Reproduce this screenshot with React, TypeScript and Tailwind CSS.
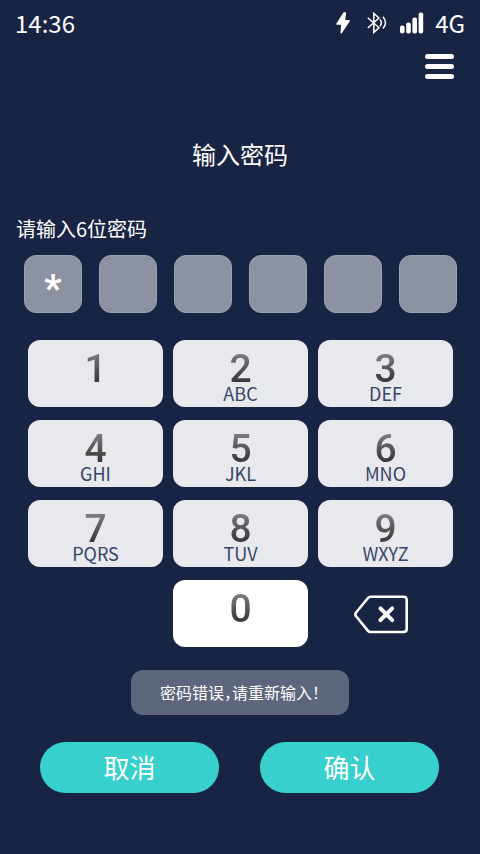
import { useState } from "react";

const keys = [
  { digit: "1", letters: "" },
  { digit: "2", letters: "ABC" },
  { digit: "3", letters: "DEF" },
  { digit: "4", letters: "GHI" },
  { digit: "5", letters: "JKL" },
  { digit: "6", letters: "MNO" },
  { digit: "7", letters: "PQRS" },
  { digit: "8", letters: "TUV" },
  { digit: "9", letters: "WXYZ" },
];

const PIN_LENGTH = 6;

const StatusBar = () => {
  return (
    <div className="flex h-[46px] items-center justify-between px-[15px] text-2xl leading-[44px]">
      <span>14:36</span>
      <div className="flex items-center">
        <svg className="mr-[17px]" width="14" height="22" viewBox="0 0 14 22" fill="currentColor" aria-hidden="true">
          <path
            d="M8 1 1 12h4.8L5.2 20.8 13.2 8.8H8.4L9.4 1z"
            stroke="currentColor"
            strokeWidth="1.4"
            strokeLinejoin="round"
          />
        </svg>
        <svg
          className="mr-[13px]"
          width="20"
          height="22"
          viewBox="0 0 20 22"
          fill="none"
          stroke="currentColor"
          strokeWidth="1.5"
          aria-hidden="true"
        >
          <path d="M0.8 5.8 12 15.8 6.8 20.4V1.4L12 6 0.8 16" />
          <path d="M13 7.6q2.6 3 0 6.6M16 4.8q5 6 0 11.6" />
        </svg>
        <svg className="mr-[11px]" width="24" height="22" viewBox="0 0 24 22" fill="currentColor" aria-hidden="true">
          <rect x="0" y="13.5" width="4.6" height="8" rx="2" />
          <rect x="6.2" y="10.5" width="4.6" height="11" rx="2" />
          <rect x="12.4" y="5.5" width="4.6" height="16" rx="2" />
          <rect x="18.6" y="0.5" width="4.6" height="21" rx="2" />
        </svg>
        <span>4G</span>
      </div>
    </div>
  );
};

const Digit = ({ children }: { children: string }) => {
  return (
    <span className="bg-linear-to-b from-[#787878] from-15% to-[#3e3e3e] to-75% bg-clip-text font-[Roboto,sans-serif] text-[39px] leading-[38px] font-medium text-transparent">
      {children}
    </span>
  );
};

const App = () => {
  const [pin, setPin] = useState("1");

  const press = (digit: string) => setPin((p) => (p + digit).slice(0, PIN_LENGTH));

  return (
    <main className="min-h-screen bg-[#182444] pb-[61px] font-['Noto_Sans_CJK_SC',sans-serif] text-white">
      <StatusBar />

      <div className="flex justify-end px-[26px] pt-2">
        <button type="button" aria-label="菜单" className="flex w-[29px] flex-col gap-[5px]">
          <span className="h-[5px] w-full rounded-full bg-white" />
          <span className="h-[5px] w-full rounded-full bg-white" />
          <span className="h-[5px] w-full rounded-full bg-white" />
        </button>
      </div>

      <h1 className="mt-[57px] text-center text-2xl leading-9 font-normal">输入密码</h1>

      <label htmlFor="pin-0" className="mt-[42px] block px-4 text-xl leading-[30px]">
        请输入6位密码
      </label>
      <div className="mt-[11px] grid grid-cols-6 gap-[17px] pr-[23px] pl-6">
        {Array.from({ length: PIN_LENGTH }, (_, i) => (
          <input
            key={i}
            id={`pin-${i}`}
            aria-label={`第${i + 1}位`}
            readOnly
            value={i < pin.length ? "*" : ""}
            className="h-[58px] w-full rounded-xl border border-[#9ba2b1] bg-[#8c92a2] pt-2.5 text-center font-[Roboto,sans-serif] text-[38px] font-bold outline-none"
          />
        ))}
      </div>

      <div className="mt-[27px] grid grid-cols-3 gap-x-2.5 gap-y-[13px] pr-[27px] pl-7">
        {keys.map(({ digit, letters }) => (
          <button
            key={digit}
            type="button"
            onClick={() => press(digit)}
            className="flex h-[67px] flex-col items-center rounded-xl bg-[#e8e9ed] pt-[10px]"
          >
            <Digit>{digit}</Digit>
            <span className="text-lg leading-[10px] text-[#36446a]">{letters}</span>
          </button>
        ))}
        <button
          type="button"
          onClick={() => press("0")}
          className="col-start-2 flex h-[67px] flex-col items-center rounded-xl bg-white pt-[10px]"
        >
          <Digit>0</Digit>
        </button>
        <button
          type="button"
          aria-label="删除"
          onClick={() => setPin((p) => p.slice(0, -1))}
          className="flex h-[67px] items-center justify-center pr-2"
        >
          <svg
            width="56"
            height="40"
            viewBox="0 0 56 40"
            fill="none"
            stroke="currentColor"
            strokeLinecap="round"
            strokeLinejoin="round"
          >
            <path
              strokeWidth="2.6"
              d="M16.5 2.8H49.4Q52.7 2.8 52.7 5.8V35Q52.7 38 49.4 38H16.5Q15 38 14 36.8L1.7 21.8Q1 20.4 1.7 19L14 4Q15 2.8 16.5 2.8Z"
            />
            <path strokeWidth="4" d="m26.4 14.4 11.8 11.8M38.2 14.4 26.4 26.2" />
          </svg>
        </button>
      </div>

      <p
        role="alert"
        className="mx-auto mt-[23px] w-[218px] rounded-xl bg-[#5e667d] text-center text-base leading-[45px] [font-feature-settings:'halt']"
      >
        密码错误，请重新输入！
      </p>

      <div className="mt-[27px] grid grid-cols-2 gap-[41px] pr-[41px] pl-10 text-[26px] leading-[49px]">
        <button type="button" className="rounded-full bg-[#37d0cc] pb-0.5">
          取消
        </button>
        <button type="button" className="rounded-full bg-[#37d0cc] pb-0.5">
          确认
        </button>
      </div>
    </main>
  );
};

export default App;
